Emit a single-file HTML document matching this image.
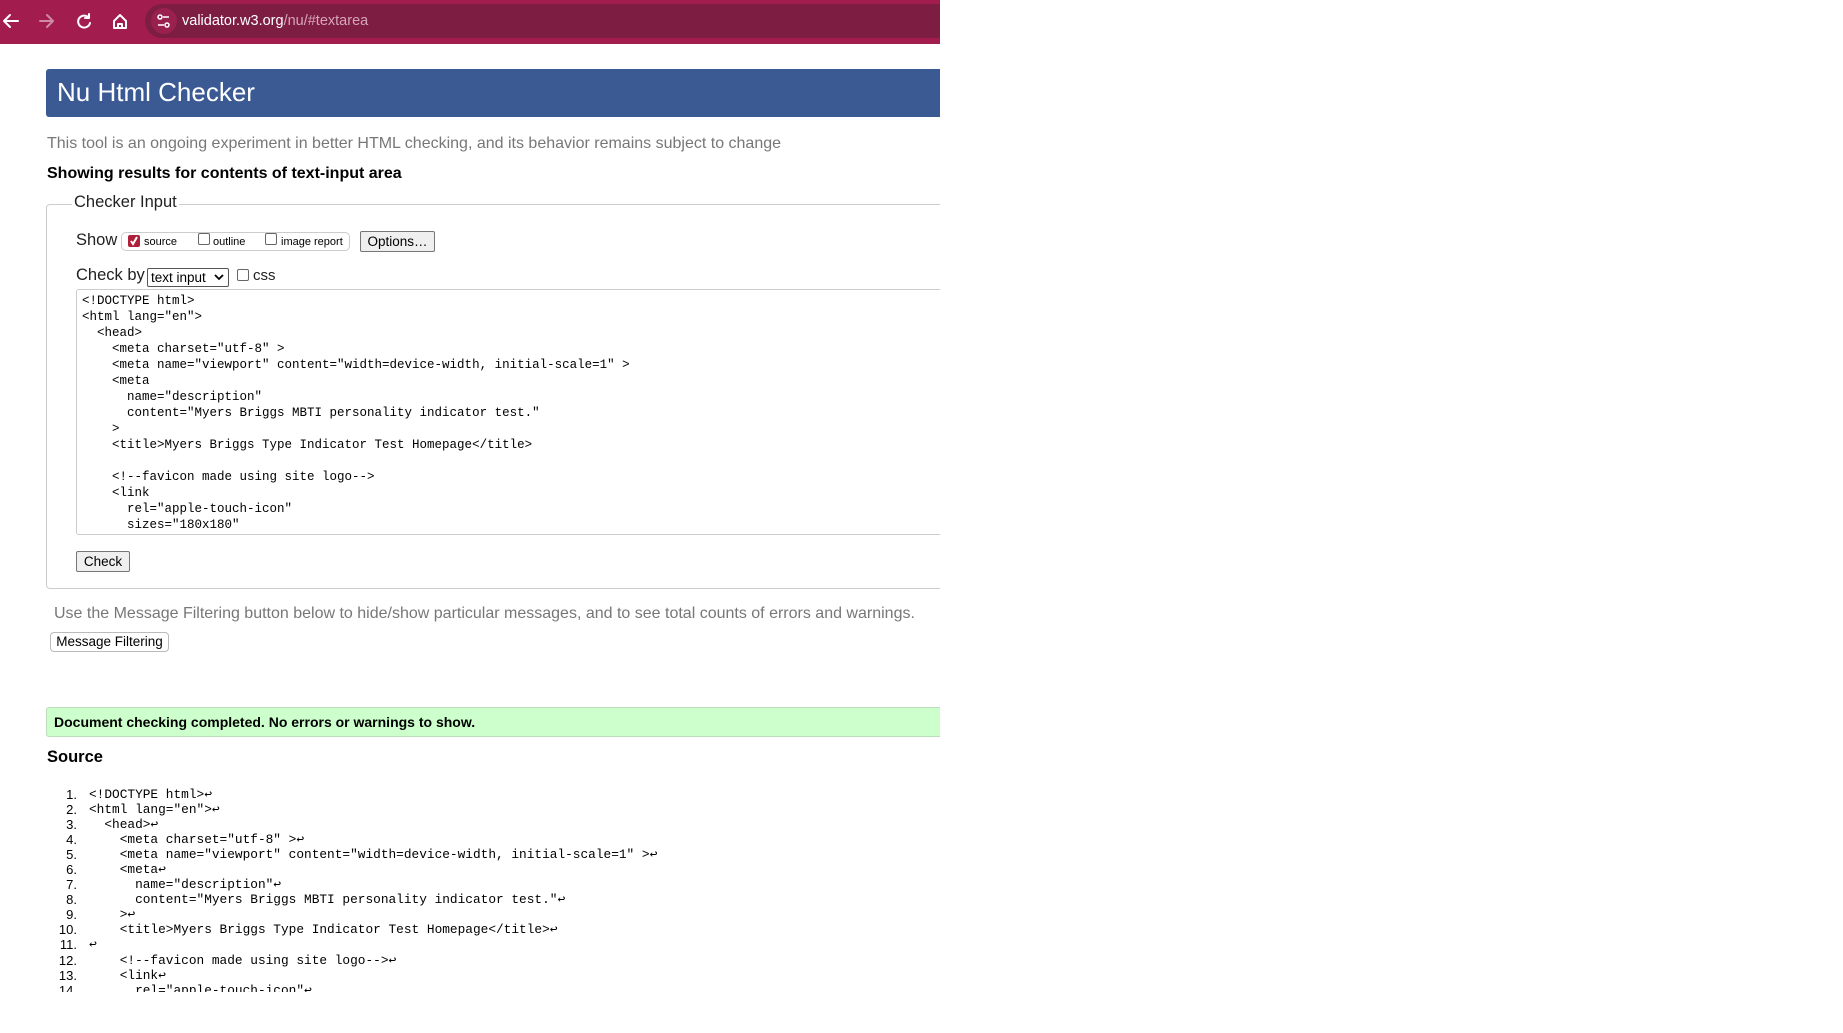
<!DOCTYPE html>
<html><head><style>
*{margin:0;padding:0;box-sizing:border-box}
body{width:1843px;height:1033px;background:#fff;position:relative;overflow:hidden;font-family:"Liberation Sans",Arial,sans-serif;color:#000}
#w{position:absolute;left:0;top:0;width:940px;height:1033px;overflow:hidden}
.a{position:absolute;white-space:pre}
.mono{font-family:"Liberation Mono",monospace}
.cb{position:absolute;width:12px;height:12px;border:1px solid #666;border-radius:2px;background:#fff}
.btn{position:absolute;border:1px solid #767676;border-radius:2px;background:#efefef;font-size:13.5px;text-align:center}
</style></head><body><div id="w">
<div class="a" style="left:0;top:0;width:945px;height:44px;background:#a21d4e"></div>
<div class="a" style="left:145px;top:4px;width:800px;height:34px;background:#7d1d42;border-radius:17px 0 0 17px"></div>
<div class="a" style="left:151px;top:8px;width:26px;height:26px;border-radius:13px;background:#9a2050"></div>
<svg class="a" style="left:0;top:0" width="145" height="44" fill="none" stroke-width="2" stroke-linecap="round" stroke-linejoin="round">
<path d="M18 21H5M10 15l-6 6 6 6" stroke="#fff"/>
<path d="M40 21h13M47 15l6 6-6 6" stroke="#d08aa5"/>
<path d="M89 18a6 6 0 1 0 1 5M89 14v4h-4" stroke="#fff"/>
<path d="M114 21l6-6 6 6v7h-12zM118 28v-4h4v4" stroke="#fff"/>
</svg>
<svg class="a" style="left:151px;top:8px" width="26" height="26" stroke="#fff" stroke-width="1.5" fill="none"><circle cx="9" cy="9" r="2"/><path d="M12 9h6M7 17h6"/><circle cx="16" cy="17" r="2"/></svg>
<div class="a" style="left:182px;top:13px;font-size:14.5px;color:#fff">validator.w3.org<span style="color:#d6a6b9">/nu/#textarea</span></div>

<div class="a" style="left:46px;top:69px;width:899px;height:48px;background:#3b5a94;border-radius:3px 0 0 3px"></div>
<div class="a" style="left:57px;top:77px;font-size:26px;color:#fff">Nu Html Checker</div>
<div class="a" style="left:47px;top:135px;font-size:16px;color:#777">This tool is an ongoing experiment in better HTML checking, and its behavior remains subject to change</div>
<div class="a" style="left:47px;top:165px;font-size:16px;font-weight:bold">Showing results for contents of text-input area</div>

<div class="a" style="left:46px;top:204px;width:910px;height:385px;border:1px solid #ccc;border-radius:4px 0 0 4px"></div>
<div class="a" style="left:72px;top:193px;background:#fff;padding:0 2px;font-size:16.5px;color:#222">Checker Input</div>
<div class="a" style="left:76px;top:231px;font-size:16.5px;color:#222">Show</div>
<div class="a" style="left:121px;top:232px;width:229px;height:19px;border:1px solid #ccc;border-radius:5px"></div>
<div class="cb" style="left:128px;top:235px;background:#b0203a;border-color:#b0203a"></div>
<svg class="a" style="left:128px;top:235px" width="12" height="12"><path d="M3 6l2 3 4-7" stroke="#fff" stroke-width="2" fill="none"/></svg>
<div class="a" style="left:144px;top:236px;font-size:11px">source</div>
<div class="cb" style="left:198px;top:233px"></div>
<div class="a" style="left:213px;top:236px;font-size:11px">outline</div>
<div class="cb" style="left:265px;top:233px"></div>
<div class="a" style="left:281px;top:236px;font-size:11px">image report</div>
<div class="btn" style="left:360px;top:231px;width:75px;height:21px;line-height:19px">Options…</div>
<div class="a" style="left:76px;top:266px;font-size:16.5px;color:#222">Check by</div>
<div class="a" style="left:147px;top:268px;width:82px;height:19px;border:1px solid #555;border-radius:2px;font-size:13.5px;padding:1px 3px">text input</div>
<svg class="a" style="left:214px;top:273px" width="10" height="8"><path d="M1 2l4 4 4-4" stroke="#000" stroke-width="1.8" fill="none"/></svg>
<div class="cb" style="left:237px;top:269px"></div>
<div class="a" style="left:253px;top:267px;font-size:15px;color:#222">css</div>

<div class="a" style="left:76px;top:289px;width:880px;height:246px;border:1px solid #ccc;border-radius:3px 0 0 3px;overflow:hidden">
<div class="a mono" style="left:5px;top:3px;font-size:12.5px;line-height:16px">&lt;!DOCTYPE html&gt;
&lt;html lang="en"&gt;
  &lt;head&gt;
    &lt;meta charset="utf-8" &gt;
    &lt;meta name="viewport" content="width=device-width, initial-scale=1" &gt;
    &lt;meta
      name="description"
      content="Myers Briggs MBTI personality indicator test."
    &gt;
    &lt;title&gt;Myers Briggs Type Indicator Test Homepage&lt;/title&gt;

    &lt;!--favicon made using site logo--&gt;
    &lt;link
      rel="apple-touch-icon"
      sizes="180x180"</div></div>
<div class="btn" style="left:76px;top:551px;width:54px;height:21px;line-height:19px">Check</div>

<div class="a" style="left:54px;top:605px;font-size:16px;color:#777">Use the Message Filtering button below to hide/show particular messages, and to see total counts of errors and warnings.</div>
<div class="btn" style="left:50px;top:632px;width:119px;height:20px;line-height:18px;border-color:#bbb;border-radius:4px;background:#fff">Message Filtering</div>

<div class="a" style="left:46px;top:707px;width:899px;height:30px;background:#ccffcc;border:1px solid #bdb;border-right:none;border-radius:3px 0 0 3px"></div>
<div class="a" style="left:54px;top:714px;font-size:14px;font-weight:bold">Document checking completed. No errors or warnings to show.</div>
<div class="a" style="left:47px;top:748px;font-size:16.5px;font-weight:bold">Source</div>

<div class="a" style="left:0;top:787px;width:945px;height:205px;overflow:hidden">
<div class="a" style="left:50px;top:0;width:27px;text-align:right;font-size:13px;line-height:15.05px">1.
2.
3.
4.
5.
6.
7.
8.
9.
10.
11.
12.
13.
14.</div>
<div class="a mono" style="left:89px;top:0;font-size:12.8px;line-height:15.05px">&lt;!DOCTYPE html&gt;↩
&lt;html lang="en"&gt;↩
  &lt;head&gt;↩
    &lt;meta charset="utf-8" &gt;↩
    &lt;meta name="viewport" content="width=device-width, initial-scale=1" &gt;↩
    &lt;meta↩
      name="description"↩
      content="Myers Briggs MBTI personality indicator test."↩
    &gt;↩
    &lt;title&gt;Myers Briggs Type Indicator Test Homepage&lt;/title&gt;↩
↩
    &lt;!--favicon made using site logo--&gt;↩
    &lt;link↩
      rel="apple-touch-icon"↩</div></div>
</div></body></html>
